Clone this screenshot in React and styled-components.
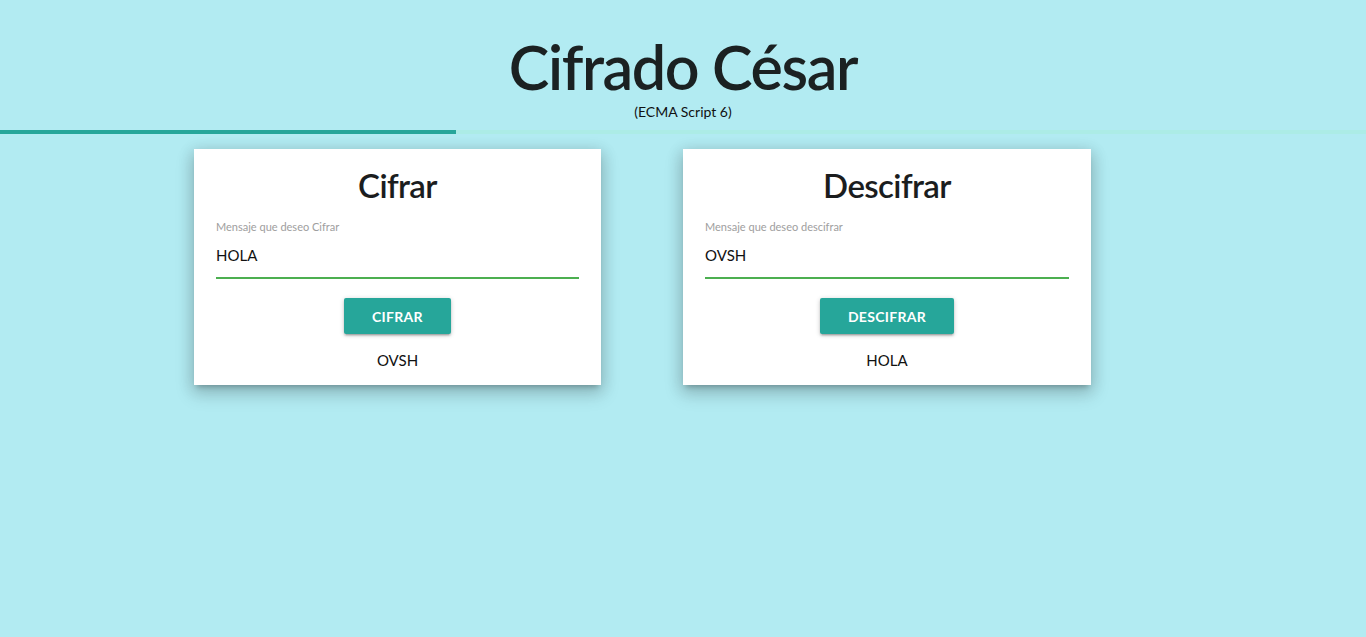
import React from 'react';
import styled, { createGlobalStyle } from 'styled-components';

const GlobalStyle = createGlobalStyle`
    html, body {
        margin: 0;
        padding: 0;
        background: #b2ebf2;
        font-family: Lato, "Open Sans", sans-serif;
        color: #1b2122;
    }
`;

const Page = styled.div`
    min-height: 637px;
    background: #b2ebf2;
`;

const Header = styled.header`
    padding-top: 31px;
    text-align: center;
`;

const Title = styled.h1`
    margin: 0;
    font-size: 61px;
    line-height: 71px;
    font-weight: 600;
    letter-spacing: -1.4px;
    color: #1b2122;
`;

const Subtitle = styled.div`
    font-size: 14px;
    line-height: 20px;
    color: #111;
`;

const Progress = styled.div`
    margin-top: 8px;
    height: 4px;
    background: #acece6;
    overflow: hidden;
`;

const ProgressFill = styled.div`
    height: 100%;
    background: #26a69a;
`;

const Cards = styled.main`
    display: flex;
    gap: 82px;
    padding: 15px 0 0 194px;
`;

const Card = styled.section`
    width: ${(props) => props.width}px;
    box-sizing: border-box;
    padding: 15px 22px 15px;
    background: #fff;
    display: flex;
    flex-direction: column;
    box-shadow: 0 8px 17px 2px rgba(0, 0, 0, 0.14),
        0 3px 14px 2px rgba(0, 0, 0, 0.12),
        0 5px 5px -3px rgba(0, 0, 0, 0.2);
`;

const CardTitle = styled.h2`
    margin: 0;
    font-size: 33px;
    line-height: 42px;
    font-weight: 600;
    letter-spacing: -0.6px;
    text-align: center;
    color: #1b1d1e;
`;

const Label = styled.label`
    margin-top: 14px;
    font-size: 11px;
    line-height: 14px;
    color: #9e9e9e;
`;

const Input = styled.input`
    margin-top: 4px;
    box-sizing: border-box;
    width: 100%;
    height: 41px;
    padding: 0 0 5px;
    border: none;
    border-bottom: 2px solid #4caf50;
    outline: none;
    background: transparent;
    font-family: inherit;
    font-size: 15px;
    color: #111;
`;

const Button = styled.button`
    align-self: center;
    margin-top: 19px;
    height: 36px;
    padding: 0 28px;
    border: none;
    border-radius: 2px;
    background: #26a69a;
    color: #fff;
    font-family: inherit;
    font-size: 14px;
    font-weight: 700;
    letter-spacing: 0.3px;
    text-transform: uppercase;
    box-shadow: 0 2px 2px 0 rgba(0, 0, 0, 0.14),
        0 3px 1px -2px rgba(0, 0, 0, 0.12),
        0 1px 5px 0 rgba(0, 0, 0, 0.2);
`;

const Result = styled.div`
    margin-top: 16px;
    font-size: 15px;
    line-height: 20px;
    text-align: center;
    color: #111;
`;

const CipherCard = ({ width, title, label, value, action, result }) => (
    <Card width={width}>
        <CardTitle>{title}</CardTitle>
        <Label>{label}</Label>
        <Input value={value} readOnly />
        <Button>{action}</Button>
        <Result>{result}</Result>
    </Card>
);

const App = () => {
    return (
        <Page>
            <GlobalStyle />
            <Header>
                <Title>Cifrado César</Title>
                <Subtitle>(ECMA Script 6)</Subtitle>
            </Header>
            <Progress>
                <ProgressFill style={{ width: '33.4%' }} />
            </Progress>
            <Cards>
                <CipherCard
                    width={407}
                    title="Cifrar"
                    label="Mensaje que deseo Cifrar"
                    value="HOLA"
                    action="Cifrar"
                    result="OVSH"
                />
                <CipherCard
                    width={408}
                    title="Descifrar"
                    label="Mensaje que deseo descifrar"
                    value="OVSH"
                    action="Descifrar"
                    result="HOLA"
                />
            </Cards>
        </Page>
    );
};

export default App;
